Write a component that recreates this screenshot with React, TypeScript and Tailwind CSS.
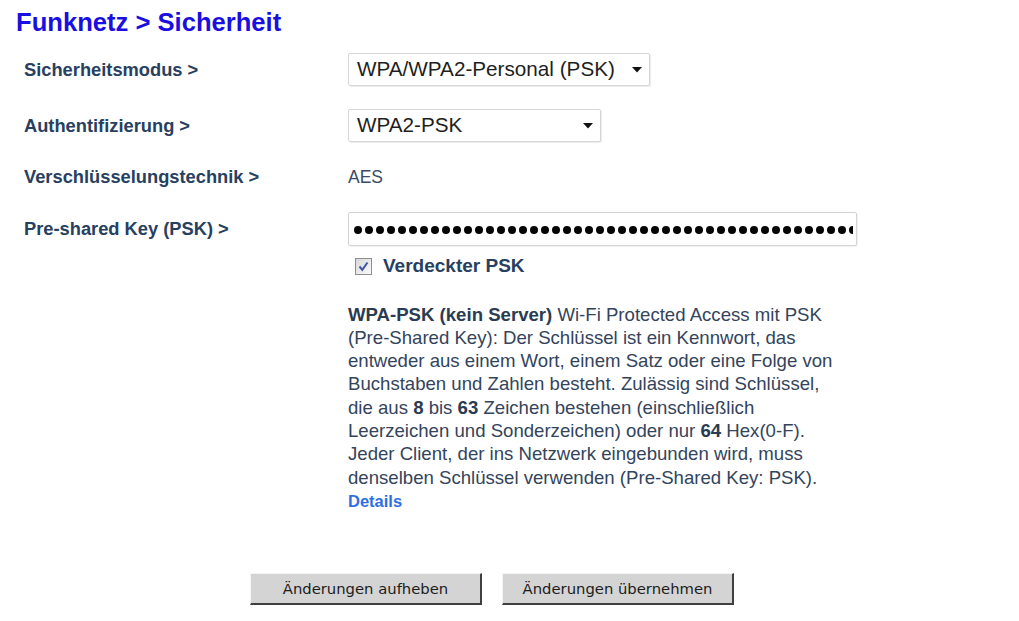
import React from "react";

function Arrow() {
  return (
    <svg width="10" height="6" viewBox="0 0 10 6" className="shrink-0">
      <path d="M0 0 L10 0 L5 5.5 Z" fill="#111" />
    </svg>
  );
}

function Select({ text, width }: { text: string; width: string }) {
  return (
    <div
      className={`${width} h-[33px] flex items-center justify-between pl-[8px] pr-[7px] bg-white border border-[#d6d6d6] rounded-[2px] shadow-[1px_1px_1px_rgba(0,0,0,0.08)]`}
    >
      <span className="text-[20.7px] leading-none text-[#1e1e1e]">{text}</span>
      <Arrow />
    </div>
  );
}

export default function App() {
  const dots = Array.from({ length: 47 });
  return (
    <div
      className="w-[1019px] h-[621px] bg-white overflow-hidden"
      style={{ fontFamily: '"Liberation Sans", Arial, sans-serif' }}
    >
      <h1 className="pl-[16px] pt-[8px] text-[25.6px] leading-[28px] font-bold text-[#1a0fe0]">
        Funknetz &gt; Sicherheit
      </h1>

      <div className="mt-[17px] flex items-center h-[33px]">
        <div className="w-[348px] pl-[24px] text-[18.3px] font-bold text-[#27405f]">Sicherheitsmodus &gt;</div>
        <Select text="WPA/WPA2-Personal (PSK)" width="w-[302px]" />
      </div>

      <div className="mt-[23px] flex items-center h-[33px]">
        <div className="w-[348px] pl-[24px] text-[18.3px] font-bold text-[#27405f]">Authentifizierung &gt;</div>
        <Select text="WPA2-PSK" width="w-[253px]" />
      </div>

      <div className="mt-[19px] flex items-center h-[32px]">
        <div className="w-[348px] pl-[24px] text-[18.3px] font-bold text-[#27405f]">Verschlüsselungstechnik &gt;</div>
        <div className="text-[17.5px] text-[#3a4b64]">AES</div>
      </div>

      <div className="mt-[19px] flex items-center h-[34px]">
        <div className="w-[348px] pl-[24px] text-[18.3px] font-bold text-[#27405f]">Pre-shared Key (PSK) &gt;</div>
        <div className="w-[509px] h-[34px] bg-white border border-[#d3d3d3] rounded-[2px] shadow-[1px_1px_1px_rgba(0,0,0,0.06)] flex items-center pl-[5px] pr-[3px] overflow-hidden">
          <div className="flex items-center gap-[3px] mt-[2px] overflow-hidden">
            {dots.map((_, i) => (
              <span key={i} className="block w-[8px] h-[8px] rounded-full bg-[#050505] shrink-0" />
            ))}
          </div>
        </div>
      </div>

      <div className="mt-[10px] flex items-center h-[20px] pl-[355px]">
        <div className="w-[17px] h-[17px] border border-[#8f8f8f] bg-gradient-to-br from-[#d8d8d8] to-[#fafafa] p-[1px] flex items-center justify-center">
          <svg width="11" height="11" viewBox="0 0 11 11">
            <path d="M1.5 5.5 L4.3 8.8 L9.5 1.5" stroke="#3f55a8" strokeWidth="2" fill="none" />
          </svg>
        </div>
        <span className="ml-[11px] text-[19px] font-bold text-[#27405f]">Verdeckter PSK</span>
      </div>

      <div className="mt-[26.6px] pl-[348px] text-[18.6px] leading-[23.3px] text-[#33445c] whitespace-nowrap">
        <b className="text-[#2a3b52]">WPA-PSK (kein Server)</b> Wi-Fi Protected Access mit PSK
        <br />
        (Pre-Shared Key): Der Schlüssel ist ein Kennwort, das
        <br />
        entweder aus einem Wort, einem Satz oder eine Folge von
        <br />
        Buchstaben und Zahlen besteht. Zulässig sind Schlüssel,
        <br />
        die aus <b className="text-[#2a3b52]">8</b> bis <b className="text-[#2a3b52]">63</b> Zeichen bestehen (einschließlich
        <br />
        Leerzeichen und Sonderzeichen) oder nur <b className="text-[#2a3b52]">64</b> Hex(0-F).
        <br />
        Jeder Client, der ins Netzwerk eingebunden wird, muss
        <br />
        denselben Schlüssel verwenden (Pre-Shared Key: PSK).
        <br />
        <span className="text-[16.5px] font-bold text-[#2f6fe3]">Details</span>
      </div>

      <div className="mt-[60px] flex pl-[250px] gap-[20px]">
        {["Änderungen aufheben", "Änderungen übernehmen"].map((t) => (
          <div
            key={t}
            className="w-[232px] h-[32px] bg-[#d4d4d4] border-t-[1.5px] border-l-[1.5px] border-t-[#f4f4f4] border-l-[#f4f4f4] border-b-2 border-r-2 border-b-[#404040] border-r-[#404040] flex items-center justify-center text-[14.8px] text-[#1c1c1c]"
            style={{ fontFamily: '"DejaVu Sans", Verdana, sans-serif' }}
          >
            {t}
          </div>
        ))}
      </div>
    </div>
  );
}
